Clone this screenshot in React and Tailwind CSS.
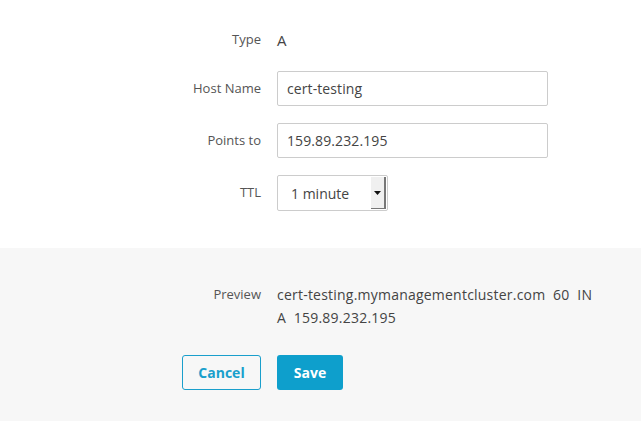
export default function App() {
  const rows = [
    { label: "Host Name", value: "cert-testing", mt: "mt-[21px]" },
    { label: "Points to", value: "159.89.232.195", mt: "mt-[17px]" },
  ];

  return (
    <div className="w-[641px] h-[421px] bg-white font-['Open_Sans',sans-serif] text-[#444]">
      {/* FORM */}
      <div className="pt-[30px] pb-[37px]">
        <div className="flex items-center h-5 gap-4">
          <div className="w-[261px] text-right text-[13px] text-[#555]">Type</div>
          <div className="text-[15px]">A</div>
        </div>

        {rows.map((r) => (
          <div key={r.label} className={`flex items-center gap-4 ${r.mt}`}>
            <div className="w-[261px] text-right text-[13px] text-[#555]">{r.label}</div>
            <div className="w-[271px] h-[35px] border border-[#ccc] rounded-[2px] flex items-center px-[9px] text-[14px] tracking-[0.1px]">
              {r.value}
            </div>
          </div>
        ))}

        <div className="flex items-center gap-4 mt-[17px]">
          <div className="w-[261px] text-right text-[13px] text-[#555]">TTL</div>
          <div className="w-[111px] h-[36px] border border-[#ccc] rounded-[2px] flex items-stretch">
            <div className="flex-1 flex items-center pl-[13px] text-[14px]">1 minute</div>
            <div className="w-[15px] my-[1px] mr-[1px] bg-[#f0f0f0] border-r-2 border-b border-[#777] flex items-center justify-center">
              <svg width="7" height="4" viewBox="0 0 7 4">
                <path d="M0 0h7L3.5 4z" fill="#111" />
              </svg>
            </div>
          </div>
        </div>
      </div>

      {/* PREVIEW */}
      <div className="bg-[#f7f7f7] h-[173px] pt-[35px]">
        <div className="flex gap-4">
          <div className="w-[261px] text-right text-[13px] text-[#555] leading-[23px]">Preview</div>
          <div className="text-[14px] leading-[23px] whitespace-pre tracking-[0.22px]">
            {"cert-testing.mymanagementcluster.com  60  IN"}
            <br />
            {"A  159.89.232.195"}
          </div>
        </div>

        <div className="flex gap-4 mt-[26px]">
          <div className="w-[261px] flex justify-end">
            <button className="w-[79px] h-[35px] border border-[#1a9fcc] rounded-[3px] text-[#1a9fcc] text-[14px] font-bold">
              Cancel
            </button>
          </div>
          <button className="w-[66px] h-[35px] bg-[#0e9fcc] rounded-[3px] text-white text-[14px] font-bold">
            Save
          </button>
        </div>
      </div>
    </div>
  );
}
